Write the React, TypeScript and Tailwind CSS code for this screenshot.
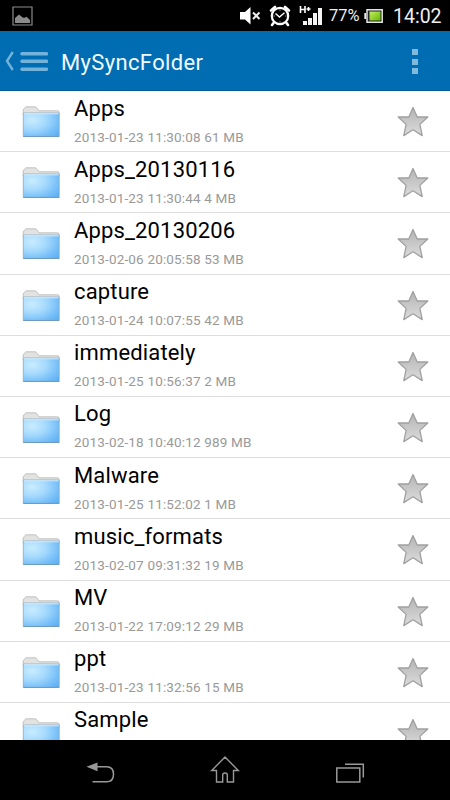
type Folder = {
  name: string;
  info?: string;
};

const folders: Folder[] = [
  { name: "Apps", info: "2013-01-23 11:30:08 61 MB" },
  { name: "Apps_20130116", info: "2013-01-23 11:30:44 4 MB" },
  { name: "Apps_20130206", info: "2013-02-06 20:05:58 53 MB" },
  { name: "capture", info: "2013-01-24 10:07:55 42 MB" },
  { name: "immediately", info: "2013-01-25 10:56:37 2 MB" },
  { name: "Log", info: "2013-02-18 10:40:12 989 MB" },
  { name: "Malware", info: "2013-01-25 11:52:02 1 MB" },
  { name: "music_formats", info: "2013-02-07 09:31:32 19 MB" },
  { name: "MV", info: "2013-01-22 17:09:12 29 MB" },
  { name: "ppt", info: "2013-01-23 11:32:56 15 MB" },
  { name: "Sample" },
];

function Gradients() {
  return (
    <svg className="absolute h-0 w-0" aria-hidden="true">
      <defs>
        <radialGradient id="folder" cx="0.25" cy="0.3" r="0.95">
          <stop offset="0" stopColor="#c9ecff" />
          <stop offset="0.4" stopColor="#a6dafd" />
          <stop offset="0.75" stopColor="#78c0f9" />
          <stop offset="1" stopColor="#5eb0f5" />
        </radialGradient>
        <linearGradient id="star" x1="0" y1="0" x2="0" y2="1">
          <stop offset="0" stopColor="#b4b4b4" />
          <stop offset="1" stopColor="#dcdcdc" />
        </linearGradient>
        <linearGradient id="battery" x1="0" y1="0" x2="1" y2="1">
          <stop offset="0" stopColor="#c6ee62" />
          <stop offset="1" stopColor="#62b800" />
        </linearGradient>
      </defs>
    </svg>
  );
}

function FolderIcon() {
  return (
    <svg width="38" height="32" viewBox="0 0 38 32" className="shrink-0">
      <path d="M1.2 9V4L3 1.5Q3.5 .8 4.5 .8H13Q14 .8 14.5 1.5L17 4.8H35.5Q37 4.8 37 6V9Z" fill="#e2e2e0" stroke="#b5b5b4" strokeWidth=".8" />
      <path d="M1.3 7H37.2V30.4H1.3Z" fill="url(#folder)" stroke="#83a9c4" strokeWidth=".8" />
      <path d="M1.6 7.8H36.8" stroke="#d6efff" strokeWidth="1" />
      <path d="M1.3 30.5H37.2" stroke="#6d9cc0" strokeWidth="1" />
    </svg>
  );
}

function StarIcon() {
  return (
    <svg width="32" height="32" viewBox="0 0 32 32" className="shrink-0">
      <path
        d="M16 1.5L20.2 11H30.8L22.9 18.4L25.2 29.6L16 23.8L6.8 29.6L9.1 18.4L1.2 11H11.8Z"
        fill="url(#star)"
        stroke="#a0a0a0"
        strokeWidth="1.3"
        strokeLinejoin="round"
      />
    </svg>
  );
}

function StatusBar() {
  return (
    <div className="flex h-[31px] shrink-0 items-center bg-black text-[#eee]">
      <svg width="22" height="20" viewBox="0 0 22 20" className="ml-3">
        <path d="M1 1H20V19H1Z" fill="none" stroke="#8b8b8b" strokeWidth="1.2" />
        <path d="M3 17V12L7 8.5L10 11L12 12L14.5 10.8L18 14V17Z" fill="#8b8b8b" />
      </svg>
      <svg width="22" height="20" viewBox="0 0 22 20" className="ml-[205px]">
        <path d="M1 6H6L11.5 1V18.5L6 13.5H1Z" fill="#fff" />
        <path d="M14 6.5L20.5 13M20.5 6.5L14 13" stroke="#eee" strokeWidth="2" />
      </svg>
      <svg width="22" height="22" viewBox="0 0 22 22" className="ml-[8px]">
        <circle cx="11" cy="11" r="8.2" fill="none" stroke="#fff" strokeWidth="2.2" />
        <path d="M2 5.5L6 2M20 5.5L16 2M4.5 18L3 20M17.5 18L19 20" stroke="#fff" strokeWidth="2.6" strokeLinecap="round" />
        <path d="M6.5 8.5L10.5 12L15.5 7.8" fill="none" stroke="#fff" strokeWidth="1.4" />
        <path d="M11 4.5V5.8M11 16.2V17.5M4.5 11H5.8M16.2 11H17.5" stroke="#aaa" />
      </svg>
      <svg width="25" height="22" viewBox="0 0 25 22" className="ml-[8px]">
        <path d="M1.5 1V8M6 1V8M1.5 4.5H6M7.5 4H11.5M9.5 2V6" stroke="#fff" strokeWidth="1.6" />
        <path d="M4 16H8V20H4ZM9 13H13V20H9ZM14 8H18V20H14ZM19 3H23V20H19Z" fill="#f4f4f4" />
      </svg>
      <span className="mt-px ml-[5px] w-[33px] text-[16.4px] leading-none">77%</span>
      <svg width="20" height="16" viewBox="0 0 20 16" className="ml-[2px]">
        <path d="M3 1.7H18.2V14.2H3Z" fill="#222" stroke="#e4e4e4" strokeWidth="1.5" />
        <path d="M.3 5H2V11H.3Z" fill="#e4e4e4" />
        <path d="M5.5 3.5H16.5V12.5H5.5Z" fill="url(#battery)" />
      </svg>
      <span className="mt-[2px] ml-[9px] text-[19.5px] leading-none">14:02</span>
    </div>
  );
}

function Header() {
  return (
    <header className="flex h-[60px] shrink-0 items-center border-b border-[#075c94] bg-[#006cb2]">
      <svg width="44" height="24" viewBox="0 0 44 24" className="ml-1">
        <path d="M8.8 3L3 12L8.8 21" fill="none" stroke="#72b2db" strokeWidth="2.4" />
        <path d="M18 4.8H42.5M18 12.3H42.5M18 20.2H42.5" stroke="#72b2db" strokeWidth="3.6" strokeLinecap="round" />
      </svg>
      <h1 className="mt-[3px] ml-[13px] text-[22px] tracking-[0.35px] text-[#f1faff]">MySyncFolder</h1>
      <div className="mt-[2px] mr-[32px] ml-auto flex flex-col gap-[3.5px]">
        <span className="h-[6px] w-[6px] bg-[#80b9dc]" />
        <span className="h-[6px] w-[6px] bg-[#80b9dc]" />
        <span className="h-[6px] w-[6px] bg-[#80b9dc]" />
      </div>
    </header>
  );
}

function FolderRow({ folder }: { folder: Folder }) {
  return (
    <li className="flex h-[61.2px] shrink-0 items-center border-b border-[#dedede] pt-[2px] pr-[21px] pl-[22px]">
      <FolderIcon />
      <div className="ml-[14px] flex h-full flex-col whitespace-nowrap">
        <span className="mt-[2.5px] text-[22px] leading-[26px] tracking-[0.15px] text-black">{folder.name}</span>
        {folder.info && (
          <span className="mt-[7px] text-[13.5px] leading-[16px] tracking-[0.17px] text-[#999]">{folder.info}</span>
        )}
      </div>
      <div className="ml-auto">
        <StarIcon />
      </div>
    </li>
  );
}

function NavBar() {
  return (
    <nav className="flex h-[60px] shrink-0 items-center justify-between bg-black px-[85px]">
      <svg width="30" height="30" viewBox="0 0 30 30" fill="none" stroke="#999" strokeWidth="1.5">
        <path d="M11 11.8H21.5Q28.5 11.8 28.5 19.2Q28.5 26.8 21.5 26.8H7.5" />
        <path d="M1.5 11.8L12.5 7.5V16.2Z" fill="#999" stroke="none" />
      </svg>
      <svg width="30" height="30" viewBox="0 0 30 30" fill="none" stroke="#999" strokeWidth="1.4">
        <path d="M15 2L28.3 15.5H23.5V27H17.3V20Q17.3 18 15 18Q12.7 18 12.7 20V27H6.5V15.5H1.7Z" />
      </svg>
      <svg width="30" height="30" viewBox="0 0 30 30" fill="none" stroke="#999" strokeWidth="1.5">
        <path d="M1.8 13H24.8V27H1.8ZM10 9.3H28.3V22.5" />
      </svg>
    </nav>
  );
}

export default function App() {
  return (
    <div className="flex h-[800px] w-[450px] flex-col overflow-hidden bg-white font-[Roboto,sans-serif]">
      <Gradients />
      <StatusBar />
      <Header />
      <ul className="flex min-h-0 flex-1 flex-col overflow-hidden">
        {folders.map((folder) => (
          <FolderRow key={folder.name} folder={folder} />
        ))}
      </ul>
      <NavBar />
    </div>
  );
}
